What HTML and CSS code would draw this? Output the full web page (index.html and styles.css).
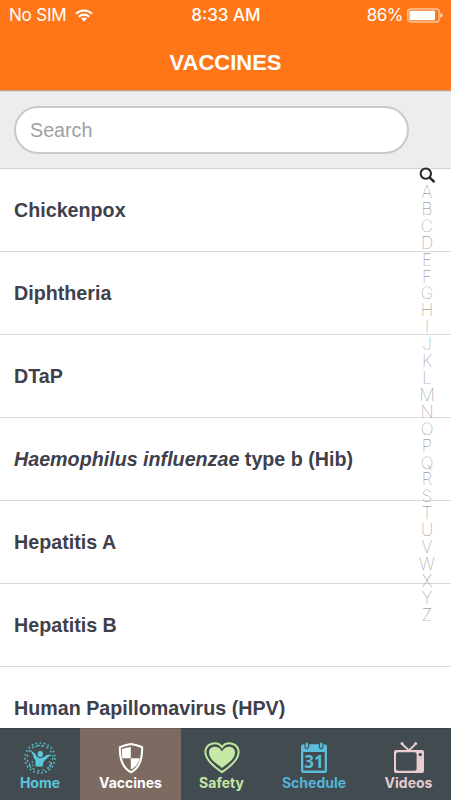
FILE: index.html
```html
<!DOCTYPE html>
<html lang="en">
<head>
<meta charset="utf-8">
<title>Vaccines</title>
<link rel="stylesheet" href="styles.css">
</head>
<body>
<div class="app">
  <header class="header">
    <div class="status">
      <div class="status-left"><span class="carrier">No SIM</span>
        <svg class="wifi" viewBox="0 0 18 13" width="18" height="13"><g fill="none" stroke="#fff" stroke-width="2.1"><path d="M1 4.8C5.5.3 12.5.3 17 4.8"/><path d="M3.8 7.7C6.8 4.9 11.2 4.9 14.2 7.7"/></g><path fill="#fff" d="M9 12.6 6 9.5Q9 7.4 12 9.5Z"/></svg>
      </div>
      <span class="clock">8:33 AM</span>
      <div class="status-right"><span class="percent">86%</span>
        <svg class="battery" viewBox="0 0 36 15" width="36" height="15"><rect x=".8" y="1" width="31.4" height="13" rx="3" fill="none" stroke="#ffc49c" stroke-width="1.4"/><rect x="2.5" y="2.7" width="25.5" height="9.6" rx="1" fill="#fff"/><path fill="#ffe1ce" d="M33.3 5q2.2.6 2.2 2.5t-2.2 2.5z"/></svg>
      </div>
    </div>
    <h1 class="title"><span>VACCINES</span></h1>
  </header>
  <div class="search-bar"><input class="search" type="text" placeholder="Search" aria-label="Search"></div>
  <main class="content">
    <ul class="list">
      <li><span class="n1">Chickenpox</span></li>
      <li><span class="n2">Diphtheria</span></li>
      <li><span class="n3">DTaP</span></li>
      <li><span class="n4"><em>Haemophilus influenzae</em> type b (Hib)</span></li>
      <li><span class="n5">Hepatitis A</span></li>
      <li><span class="n6">Hepatitis B</span></li>
      <li><span class="n7">Human Papillomavirus (HPV)</span></li>
    </ul>
    <nav class="index">
      <svg viewBox="0 0 17 17" width="17" height="17"><g fill="none" stroke="#26262a"><circle cx="6.8" cy="6.6" r="5.2" stroke-width="2"/><path d="m10.5 10.3 5 4.9" stroke-width="2.5"/></g></svg>
      <span>A</span><span>B</span><span>C</span><span>D</span><span>E</span><span>F</span><span>G</span><span>H</span><span>I</span><span>J</span><span>K</span><span>L</span><span>M</span><span>N</span><span>O</span><span>P</span><span>Q</span><span>R</span><span>S</span><span>T</span><span>U</span><span>V</span><span>W</span><span>X</span><span>Y</span><span>Z</span>
    </nav>
  </main>
  <nav class="tabs">
    <div class="tab home">
      <svg viewBox="0 0 34 34" width="34" height="34"><g fill="none" stroke="#54b5c6"><circle cx="17" cy="17" r="15" stroke-width="1.7" stroke-dasharray="1.8 2.3"/><circle cx="17" cy="17" r="12.7" stroke-width="1.5" stroke-dasharray="2 3.1"/><path d="M6.5 22q0 5 4 6m-1-8q-1 4 2 6m15-6q2 4-2 7m4-6q0 4-3 7M12 6q4-3 8 0" stroke-width="1.1" stroke-dasharray="2 1.5"/></g><g fill="#5bc6d8"><ellipse cx="17.3" cy="13" rx="2.7" ry="3.1"/><path d="M6.6 8.6 12 12.4q2.2 4.7 6 4.7 3.2-.6 5.2-2.8 2.5-1.1 6-.5-2.5 1.3-4.4 2.7-2.8 3-4.4 4.4l-.8 4.5h-7l-.2-6Q10.7 17.5 9.7 13.5z"/></g></svg>
      <span>Home</span>
    </div>
    <div class="tab vaccines active">
      <svg viewBox="0 0 34 34" width="34" height="34"><path d="M17 3Q11 3.7 5.9 6.3C5.6 17.5 7.6 26.5 17 31.2 26.4 26.5 28.4 17.5 28.1 6.3Q23 3.7 17 3Z" fill="none" stroke="#fff" stroke-width="2.1" stroke-linejoin="round"/><path fill="#fff" d="M16.8 5.9v11.3H8.4Q7.8 13 8 8.1 12 6.3 16.8 5.9ZM16.8 17.2h8.8Q24 25.2 16.8 28.6Z"/></svg>
      <span>Vaccines</span>
    </div>
    <div class="tab safety">
      <svg viewBox="0 0 38 34" width="38" height="34"><path d="M19 31.2C9.2 24.5 2.4 18.3 2.4 11.3 2.4 2 14.2-.5 19 6.2 23.8-.5 35.6 2 35.6 11.3 35.6 18.3 28.8 24.5 19 31.2Z" fill="none" stroke="#bee69d" stroke-width="2"/><path fill="#c6e8a5" d="M19 26.9C11 21.2 6 16.6 6 11.4 6 4.9 15 3.4 19 10.4 23 3.4 32 4.9 32 11.4 32 16.6 27 21.2 19 26.9Z"/></svg>
      <span>Safety</span>
    </div>
    <div class="tab schedule">
      <svg viewBox="0 0 34 34" width="34" height="34"><path fill="#5bbddb" fill-rule="evenodd" d="M6.3 3.2h21.4q2.3 0 2.3 2.3v24.2q0 2.3-2.3 2.3H6.3Q4 32 4 29.7V5.5q0-2.3 2.3-2.3ZM6.3 11v18.6h21.4V11Z"/><g fill="#5bbddb" stroke="#424c50" stroke-width="1.1"><rect x="8" y="1" width="3.6" height="6.6" rx="1.8"/><rect x="22.4" y="1" width="3.6" height="6.6" rx="1.8"/></g><text class="day" x="17" y="26.6" text-anchor="middle">31</text></svg>
      <span>Schedule</span>
    </div>
    <div class="tab videos">
      <svg viewBox="0 0 34 34" width="34" height="34"><g fill="none" stroke="#e9cdd0"><path d="m10 3 7 6.5L23.5 3" stroke-width="1.9"/></g><circle cx="10" cy="2.6" r="1.5" fill="#e9cdd0"/><circle cx="23.7" cy="2.6" r="1.5" fill="#e9cdd0"/><path fill="#e9cdd0" fill-rule="evenodd" d="M4 9h26q2 0 2 2v19q0 2-2 2H4q-2 0-2-2V11q0-2 2-2Zm2 2.2q-2 0-2 2v14.6q0 2 2 2h16.6q2 0 2-2V13.200q0-2-2-2Z"/><circle cx="28.3" cy="13.600" r="1.7" fill="#424c50"/></svg>
      <span>Videos</span>
    </div>
  </nav>
</div>
</body>
</html>
```
FILE: styles.css
```css
* { box-sizing: border-box; }
body { margin: 0; font-family: "Liberation Sans", Arial, sans-serif; }
.app { width: 451px; height: 800px; display: flex; flex-direction: column; overflow: hidden; background: #fff; }

.header { height: 91px; flex: none; background: #ff7619; color: #fff; border-bottom: 1px solid #c99c80; display: flex; flex-direction: column; }
.status { height: 30px; display: grid; grid-template-columns: 1fr auto 1fr; align-items: center; padding: 0 8px 0 9px; font-family: Inter, sans-serif; font-size: 17px; }
.status-left, .status-right { display: flex; align-items: center; }
.status-left { gap: 9px; }
.status-right { justify-content: flex-end; gap: 4px; }
.carrier { letter-spacing: -0.2px; }
.clock { font-weight: 500; letter-spacing: 0; }
.percent { letter-spacing: -0.5px; }
.title { margin: 0; height: 60px; line-height: 65px; text-align: center; font-size: 22px; font-weight: 700; }

.search-bar { height: 78px; flex: none; background: #ededed; border-top: 1px solid #d8dcdf; border-bottom: 1px solid #d2d2d2; padding: 14px 0 0 14px; }
.search { display: block; width: 395px; height: 48px; border: 2px solid #c9c9c9; border-radius: 24px; background: #fff; padding: 0 14px; font-family: "Liberation Sans", Arial, sans-serif; font-size: 19.7px; outline: none; }
.search::placeholder { color: #a0a0a0; opacity: 1; }

.content { flex: 1; min-height: 0; position: relative; }
.list { list-style: none; margin: 0; padding: 0; height: 559px; overflow: hidden; }
.list li { height: 83px; padding: 0 14px; line-height: 82px; border-bottom: 1px solid #dadada; font-size: 19.7px; font-weight: 700; color: #40404b; white-space: nowrap; }
.index { position: absolute; top: -2px; right: 14px; width: 20px; display: flex; flex-direction: column; align-items: center; }
.index svg { display: block; flex: none; }
.index span { height: 16.92px; line-height: 17px; font-family: Inter, sans-serif; font-weight: 100; font-size: 17px; color: #77777c; }

.tabs { position: relative; height: 72px; flex: none; display: grid; grid-template-columns: 80px 101px 81px 104px 85px; background: #424c50; }
.tab { display: flex; flex-direction: column; align-items: center; padding-top: 12px; font-size: 14px; font-weight: 700; border-top: 1px solid #394347; }
.tab svg { display: block; flex: none; }
.tab span { line-height: 18px; margin-top: -1px; font-family: Inter, sans-serif; }
.active { background: #7d6b62; border-top-color: #6d5e56; }
.home { color: #5bc6d8; }
.vaccines { color: #fff; }
.safety { color: #c6e8a5; }
.schedule { color: #55b3d7; }
.videos { color: #e5cbd0; }
.day { font: 700 17px "Noto Sans", sans-serif; fill: #5bbddb; }
```
